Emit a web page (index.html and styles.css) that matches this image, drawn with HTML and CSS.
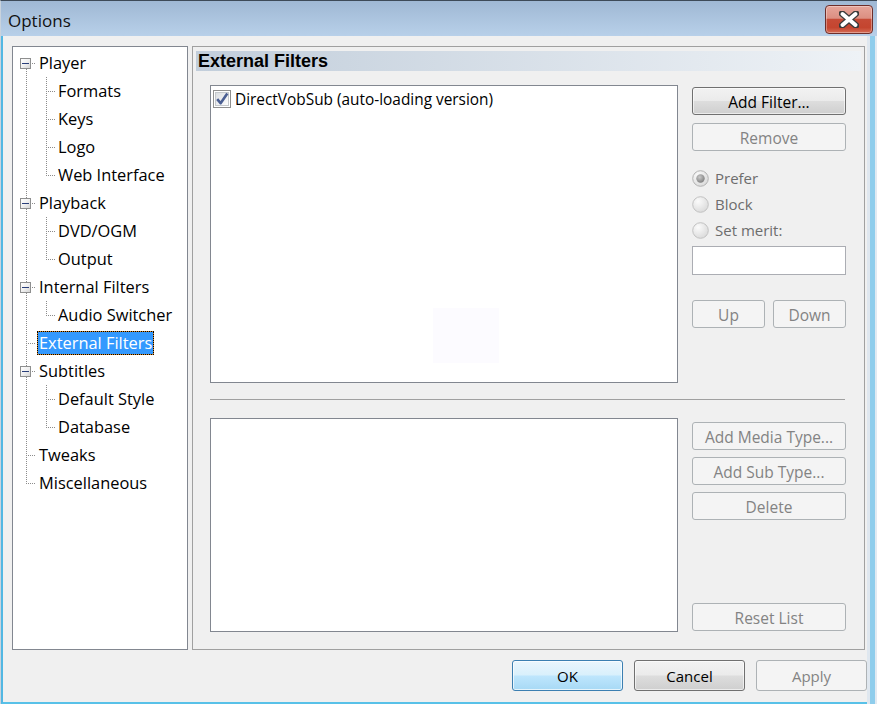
FILE: index.html
```html
<!DOCTYPE html>
<html>
<head>
<meta charset="utf-8">
<title>Options</title>
<link rel="stylesheet" href="styles.css">
</head>
<body>
<div class="window">
  <div class="titlebar">
    <span class="title">Options</span>
    <div class="close">
      <svg width="20" height="17" viewBox="0 0 20 17">
        <path d="M3 2.5 L17 14.5 M17 2.5 L3 14.5" stroke="#3b3b3b" stroke-width="6.5" stroke-linecap="round"/>
        <path d="M3.5 3 L16.5 14 M16.5 3 L3.5 14" stroke="#ffffff" stroke-width="4" stroke-linecap="round"/>
      </svg>
    </div>
  </div>
  <div class="client">
    <div class="main">
      <div class="tree">
        <div class="row l0 first"><span class="exp"></span><span class="lbl">Player</span></div>
        <div class="row l1"><span class="lbl">Formats</span></div>
        <div class="row l1"><span class="lbl">Keys</span></div>
        <div class="row l1"><span class="lbl">Logo</span></div>
        <div class="row l1 last"><span class="lbl">Web Interface</span></div>
        <div class="row l0"><span class="exp"></span><span class="lbl">Playback</span></div>
        <div class="row l1"><span class="lbl">DVD/OGM</span></div>
        <div class="row l1 last"><span class="lbl">Output</span></div>
        <div class="row l0"><span class="exp"></span><span class="lbl">Internal Filters</span></div>
        <div class="row l1 last"><span class="lbl">Audio Switcher</span></div>
        <div class="row l0 leaf"><span class="lbl sel">External Filters</span></div>
        <div class="row l0"><span class="exp"></span><span class="lbl">Subtitles</span></div>
        <div class="row l1"><span class="lbl">Default Style</span></div>
        <div class="row l1 last"><span class="lbl">Database</span></div>
        <div class="row l0 leaf"><span class="lbl">Tweaks</span></div>
        <div class="row l0 leaf last"><span class="lbl">Miscellaneous</span></div>
      </div>
      <div class="page">
        <div class="header">External Filters</div>
        <div class="upper">
          <div class="list list1">
            <div class="item">
              <span class="chk">
                <svg width="18" height="18" viewBox="0 0 18 18">
                  <defs>
                    <linearGradient id="cg" x1="0" y1="0" x2="1" y2="1">
                      <stop offset="0" stop-color="#d9dce0"/>
                      <stop offset="1" stop-color="#ffffff"/>
                    </linearGradient>
                  </defs>
                  <rect x="0.5" y="0.5" width="17" height="17" fill="#fff" stroke="#8f8f8f"/>
                  <rect x="2.5" y="2.5" width="13" height="13" fill="url(#cg)" stroke="#c4c8cc"/>
                  <path d="M4.2 9.2 L7.6 13.2 L14.3 3.6" fill="none" stroke="#4b5f93" stroke-width="2.6" stroke-linejoin="round"/>
                </svg>
              </span>
              <span class="itext">DirectVobSub (auto-loading version)</span>
            </div>
            <div class="ghost"></div>
          </div>
          <div class="side">
            <button class="btn b-add">Add Filter...</button>
            <button class="btn dis b-rem">Remove</button>
            <div class="radios">
              <div class="radio">
                <svg width="17" height="17" viewBox="0 0 17 17">
                  <defs>
                    <radialGradient id="rg1" cx="0.35" cy="0.3" r="0.8">
                      <stop offset="0" stop-color="#fbfbfb"/>
                      <stop offset="1" stop-color="#d8d8d8"/>
                    </radialGradient>
                    <radialGradient id="rg2" cx="0.4" cy="0.35" r="0.7">
                      <stop offset="0" stop-color="#c9c9c9"/>
                      <stop offset="1" stop-color="#7d7d7d"/>
                    </radialGradient>
                  </defs>
                  <circle cx="8.5" cy="8.5" r="7.8" fill="url(#rg1)" stroke="#b3b3b3"/>
                  <circle cx="8.5" cy="8.5" r="4.2" fill="url(#rg2)"/>
                </svg>
                <span>Prefer</span>
              </div>
              <div class="radio">
                <svg width="17" height="17" viewBox="0 0 17 17">
                  <circle cx="8.5" cy="8.5" r="7.8" fill="url(#rg1)" stroke="#c2c2c2"/>
                </svg>
                <span>Block</span>
              </div>
              <div class="radio">
                <svg width="17" height="17" viewBox="0 0 17 17">
                  <circle cx="8.5" cy="8.5" r="7.8" fill="url(#rg1)" stroke="#c2c2c2"/>
                </svg>
                <span>Set merit:</span>
              </div>
            </div>
            <div class="edit"></div>
            <div class="updown">
              <button class="btn dis">Up</button>
              <button class="btn dis">Down</button>
            </div>
          </div>
        </div>
        <div class="sep"></div>
        <div class="lower">
          <div class="list list2"></div>
          <div class="side side2">
            <button class="btn dis">Add Media Type...</button>
            <button class="btn dis">Add Sub Type...</button>
            <button class="btn dis">Delete</button>
            <div class="spacer"></div>
            <button class="btn dis">Reset List</button>
          </div>
        </div>
      </div>
    </div>
    <div class="footer">
      <button class="btn def">OK</button>
      <button class="btn">Cancel</button>
      <button class="btn dis">Apply</button>
    </div>
  </div>
</div>
</body>
</html>
```

FILE: styles.css
```css
* { box-sizing: border-box; }
html, body { margin: 0; padding: 0; }
body {
  width: 877px;
  height: 704px;
  overflow: hidden;
  font-family: "Open Sans", "Noto Sans", sans-serif;
  font-size: 15px;
  color: #000;
  background: #e2eaf2;
}
.window {
  width: 877px;
  height: 704px;
  display: flex;
  flex-direction: column;
  border-top: 1px solid #3d4a58;
  border-left: 1px solid #c9d3dd;
  background: linear-gradient(to right, #f0f0f0 0 866px, #dfe7ef 866px 869px, #8fcdec 869px 874px, #e2eaf2 874px);
}
.titlebar {
  height: 35px;
  flex: none;
  display: flex;
  align-items: center;
  padding-left: 7px;
  padding-right: 4px;
  background: linear-gradient(#9fb8d4, #b8d0e9);
}
.title {
  font-size: 17px;
  color: #111;
  flex: 1;
  padding-top: 3px;
}
.close {
  width: 48px;
  height: 29px;
  margin-top: 2px;
  border: 1px solid #6e2e2a;
  border-radius: 4px;
  background: linear-gradient(#e6a59a 0%, #dc8f82 45%, #c64a36 50%, #c4452f 80%, #d66c55 100%);
  box-shadow: inset 0 0 0 1px rgba(255,255,255,0.35);
  display: flex;
  align-items: center;
  justify-content: center;
}
.client {
  width: 866px;
  height: 668px;
  background: #f0f0f0;
  border-left: 2px solid #52b7e3;
  border-bottom: 2px solid #58c1e8;
  display: flex;
  flex-direction: column;
  padding: 10px 0 0 9px;
}
.main {
  display: flex;
  gap: 4px;
  height: 604px;
}
.tree {
  width: 176px;
  height: 604px;
  background: #fff;
  border: 1px solid #828790;
  padding-top: 2px;
  font-size: 16.4px;
  --v: repeating-linear-gradient(to bottom, #8c8c8c 0 1px, transparent 1px 2px);
  --h: repeating-linear-gradient(to right, #8c8c8c 0 1px, transparent 1px 2px);
}
.row {
  height: 28px;
  display: flex;
  align-items: center;
  white-space: nowrap;
}
.row.l0 {
  padding-left: 7px;
  background: var(--v) 13px 0 / 1px 28px no-repeat, var(--h) 13px 14px / 10px 1px no-repeat;
}
.row.l0.first {
  background: var(--v) 13px 14px / 1px 14px no-repeat, var(--h) 13px 14px / 10px 1px no-repeat;
}
.row.l0.last {
  background: var(--v) 13px 0 / 1px 15px no-repeat, var(--h) 13px 14px / 10px 1px no-repeat;
}
.row.l0.leaf { padding-left: 24px; }
.row.l1 {
  padding-left: 43px;
  background: var(--v) 13px 0 / 1px 28px no-repeat, var(--v) 33px 0 / 1px 28px no-repeat, var(--h) 33px 14px / 10px 1px no-repeat;
}
.row.l1.last {
  background: var(--v) 13px 0 / 1px 28px no-repeat, var(--v) 33px 0 / 1px 15px no-repeat, var(--h) 33px 14px / 10px 1px no-repeat;
}
.exp {
  width: 11px;
  height: 11px;
  margin-right: 6px;
  border: 1px solid #8e8f8f;
  background: linear-gradient(135deg, #ffffff 0%, #f0f0f0 50%, #d6d6d6 100%);
  display: flex;
  align-items: center;
  justify-content: center;
}
.exp::after {
  content: "";
  width: 7px;
  height: 1px;
  background: #2a3f7a;
}
.lbl {
  height: 24px;
  line-height: 24px;
  padding: 0 2px;
}
.lbl.sel {
  background: #3399ff;
  color: #fff;
  box-shadow: inset 0 0 0 1px #d88a28;
  outline: 1px dotted #000;
  outline-offset: -1px;
}
.page {
  width: 673px;
  height: 604px;
  border: 1px solid #a0a0a0;
  display: flex;
  flex-direction: column;
}
.header {
  margin: 4px 3px 0 3px;
  height: 20px;
  background: linear-gradient(to right, #c2cedb, #eef2f6);
  font-family: "Liberation Sans", Arial, sans-serif;
  font-weight: bold;
  font-size: 18px;
  line-height: 20px;
  padding-left: 2px;
  color: #000;
}
.upper {
  display: flex;
  gap: 14px;
  margin-top: 14px;
  padding-left: 17px;
}
.list {
  width: 468px;
  background: #fff;
  border: 1px solid #828790;
  position: relative;
}
.list1 { height: 298px; padding: 2px 0 0 2px; }
.list2 { height: 214px; }
.item {
  display: flex;
  align-items: center;
  height: 22px;
  gap: 4px;
  white-space: nowrap;
}
.itext { font-size: 15.4px; }
.chk { width: 18px; height: 18px; display: block; }
.chk svg { display: block; }
.ghost {
  position: absolute;
  left: 222px;
  top: 222px;
  width: 66px;
  height: 55px;
  background: #fcfbff;
}
.side {
  width: 154px;
  display: flex;
  flex-direction: column;
}
.btn {
  font-family: "Open Sans", "Noto Sans", sans-serif;
  font-size: 15.5px;
  height: 28px;
  padding: 1px 0 0 0;
  border: 1px solid #707070;
  border-radius: 3px;
  color: #000;
  background: linear-gradient(#f2f2f2 0%, #ebebeb 48%, #dddddd 52%, #cfcfcf 100%);
  box-shadow: inset 0 0 0 1px rgba(255,255,255,0.6);
  white-space: nowrap;
}
.btn.dis {
  border-color: #adb2b5;
  background: #f4f4f4;
  color: #838383;
  box-shadow: none;
}
.btn.def {
  border-color: #3c7fb1;
  background: linear-gradient(#eaf6fd 0%, #d9f0fc 48%, #bee6fd 52%, #a7d9f5 100%);
  box-shadow: inset 0 0 0 1px rgba(255,255,255,0.7);
}
.footer .btn { font-size: 15px; padding-top: 0; }
.b-add { margin-top: 2px; }
.b-rem { margin-top: 8px; }
.radios {
  margin-top: 14px;
  display: flex;
  flex-direction: column;
}
.radio {
  height: 26px;
  display: flex;
  align-items: center;
  gap: 6px;
  color: #6d6d6d;
}
.radio svg { display: block; flex: none; }
.edit {
  margin-top: 3px;
  height: 29px;
  background: #fff;
  border: 1px solid #abadb3;
}
.updown {
  margin-top: 25px;
  display: flex;
  gap: 8px;
}
.updown .btn { width: 73px; }
.sep {
  height: 1px;
  background: #a0a0a0;
  margin: 16px 18px 0 17px;
  width: 635px;
}
.lower {
  display: flex;
  gap: 14px;
  margin-top: 18px;
  padding-left: 17px;
}
.side2 { padding-top: 4px; gap: 7px; }
.side2 .spacer { flex: 1; }
.side2 .btn:last-child { margin-bottom: 1px; }
.footer {
  display: flex;
  gap: 11px;
  padding-left: 500px;
  margin-top: 10px;
}
.footer .btn { width: 111px; height: 31px; }
```
